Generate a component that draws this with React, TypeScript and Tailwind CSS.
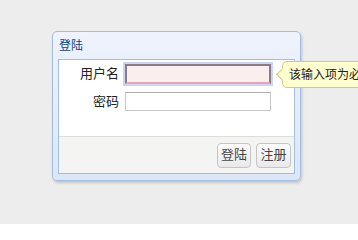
const FONT = '"Liberation Serif", "Noto Sans CJK SC", serif';

export default function App() {
  return (
    <div
      className="relative h-[224px] w-[358px] overflow-hidden bg-[#ededed] pl-[52px] pt-[31px]"
      style={{ fontFamily: FONT }}
    >
      <div className="flex h-[150px] w-[249px] flex-col rounded-[5px] border border-[#a3bde3] bg-gradient-to-b from-[#eef3fc] to-[#dce6f6] shadow-[1px_2px_3px_rgba(0,0,0,0.18)]">
        <div className="flex h-[27px] items-center px-[6px] text-[12px] text-[#15428b]">登陆</div>
        <div className="flex-1 px-[5px] pb-[6px]">
          <div className="flex h-full flex-col border border-[#a3bde3] bg-white">
            <div className="flex flex-1 flex-col gap-[8px] pt-[4px]">
              <div className="flex items-center">
                <span className="w-[60px] text-right text-[13px] text-[#222]">用户名</span>
                <input
                  className="ml-[6px] h-[20px] w-[146px] border-2 border-[#8a7c82] border-b-[#e9a3b4] bg-[#fbeeee] shadow-[0_0_0_2px_#c9d6f2] outline-none"
                  readOnly
                />
              </div>
              <div className="flex items-center">
                <span className="w-[60px] text-right text-[13px] text-[#222]">密码</span>
                <input
                  type="password"
                  className="ml-[6px] h-[19px] w-[146px] border border-[#c8c8c8] border-t-[#b0b0b0] bg-white outline-none"
                  readOnly
                />
              </div>
            </div>
            <div className="flex h-[37px] items-center justify-end gap-[5px] border-t border-[#dddddd] bg-[#f4f4f3] pr-[3px]">
              <button className="h-[25px] w-[34px] rounded-[4px] border border-[#c4c4c4] bg-gradient-to-b from-[#fdfdfd] to-[#e9e9e9] text-[13px] text-[#444]">
                登陆
              </button>
              <button className="h-[25px] w-[35px] rounded-[4px] border border-[#c4c4c4] bg-gradient-to-b from-[#fdfdfd] to-[#e9e9e9] text-[13px] text-[#444]">
                注册
              </button>
            </div>
          </div>
        </div>
      </div>
      <div className="absolute left-[282px] top-[61px] flex h-[27px] items-center whitespace-nowrap rounded-[5px] border border-[#d9c589] bg-[#ffffd0] pl-[6px] pr-[8px] text-[12px] text-[#222]">
        <span className="absolute left-[-5px] top-[8px] h-[9px] w-[9px] rotate-45 border-b border-l border-[#d9c589] bg-[#ffffd0]" />
        <span className="relative">该输入项为必填项</span>
      </div>
    </div>
  );
}
